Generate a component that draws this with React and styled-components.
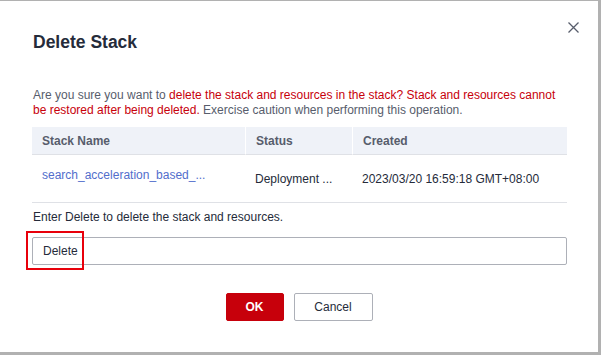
import React from 'react';
import styled, { createGlobalStyle } from 'styled-components';

const GlobalStyle = createGlobalStyle`
html, body {
  margin: 0;
  padding: 0;
  background: #b1b1b1;
  font-family: "Liberation Sans", Arial, sans-serif;
}
`;

const Page = styled.div`
width: 601px;
height: 355px;
padding-top: 1px;
box-sizing: border-box;
`;

const Dialog = styled.div`
position: relative;
width: 598px;
height: 351px;
background: #fff;
box-sizing: border-box;
padding: 29px 31px 0 32px;
display: flex;
flex-direction: column;
`;

const Title = styled.h2`
margin: 0;
font-size: 17.5px;
line-height: 24px;
font-weight: 700;
color: #252b3a;
padding-left: 1px;
`;

const Close = styled.button`
position: absolute;
top: 19px;
right: 18px;
width: 14px;
height: 14px;
padding: 0;
border: none;
background: none;
display: flex;
align-items: center;
justify-content: center;
`;

const Message = styled.p`
margin: 34px 0 0 1px;
font-size: 12px;
line-height: 15px;
color: #575d6c;
`;

const Danger = styled.span`
color: #c7000b;
`;

const Table = styled.div`
margin-top: 9px;
display: grid;
grid-template-columns: 213px 107px 1fr;
`;

const HeadCell = styled.div`
background: #eff2f8;
height: 27px;
border-bottom: 1px solid #dfe1e6;
border-left: ${p => (p.first ? 'none' : '1px solid #fff')};
padding-left: 10px;
display: flex;
align-items: center;
font-size: 12px;
font-weight: 700;
color: #575d6c;
`;

const Cell = styled.div`
border-bottom: 1px solid #dfe1e6;
padding: ${p => (p.raised ? '0 0 8px 10px' : '0 0 0 10px')};
box-sizing: border-box;
height: 48px;
display: flex;
align-items: center;
font-size: 12px;
color: ${p => (p.link ? '#526ecc' : '#252b3a')};
white-space: nowrap;
`;

const Hint = styled.div`
margin: 6px 0 0 1px;
font-size: 12px;
line-height: 16px;
color: #252b3a;
`;

const InputWrap = styled.div`
position: relative;
margin-top: 12px;
`;

const Input = styled.input`
display: block;
width: 100%;
height: 28px;
box-sizing: border-box;
border: 1px solid #adb0b8;
border-radius: 2px;
padding: 0 10px;
font-family: "Liberation Sans", Arial, sans-serif;
font-size: 12px;
color: #252b3a;
outline: none;
`;

const Highlight = styled.div`
position: absolute;
left: -6px;
top: -6px;
width: 58px;
height: 39px;
box-sizing: border-box;
border: 2px solid #e8000b;
pointer-events: none;
`;

const Actions = styled.div`
margin-top: 28px;
display: flex;
justify-content: center;
gap: 10px;
padding-right: 1px;
`;

const Button = styled.button`
height: 28px;
min-width: ${p => (p.primary ? '58px' : '79px')};
box-sizing: border-box;
border-radius: 2px;
border: 1px solid ${p => (p.primary ? '#c7000b' : '#adb0b8')};
background: ${p => (p.primary ? '#c7000b' : '#fff')};
color: ${p => (p.primary ? '#fff' : '#252b3a')};
font-family: "Liberation Sans", Arial, sans-serif;
font-size: 12px;
font-weight: ${p => (p.primary ? 700 : 400)};
padding: 0 16px;
`;

export default function App() {
  return (
    <Page>
      <GlobalStyle />
      <Dialog>
        <Title>Delete Stack</Title>
        <Close aria-label="close">
          <svg width="11" height="11" viewBox="0 0 11 11">
            <path d="M0.5 0.5L10.5 10.5M10.5 0.5L0.5 10.5" stroke="#575d6c" strokeWidth="1.3" fill="none" />
          </svg>
        </Close>
        <Message>
          Are you sure you want to <Danger>delete the stack and resources in the stack? Stack and resources cannot be restored after being deleted.</Danger> Exercise caution when performing this operation.
        </Message>
        <Table>
          <HeadCell first>Stack Name</HeadCell>
          <HeadCell>Status</HeadCell>
          <HeadCell>Created</HeadCell>
          <Cell link raised>search_acceleration_based_...</Cell>
          <Cell>Deployment ...</Cell>
          <Cell>2023/03/20 16:59:18 GMT+08:00</Cell>
        </Table>
        <Hint>Enter Delete to delete the stack and resources.</Hint>
        <InputWrap>
          <Input defaultValue="Delete" />
          <Highlight />
        </InputWrap>
        <Actions>
          <Button primary>OK</Button>
          <Button>Cancel</Button>
        </Actions>
      </Dialog>
    </Page>
  );
}
